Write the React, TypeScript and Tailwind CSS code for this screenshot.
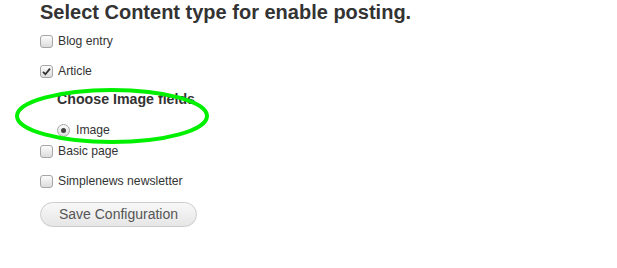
const items = [
  { label: 'Blog entry', checked: false },
  { label: 'Article', checked: true },
];

const rest = ['Basic page', 'Simplenews newsletter'];

function Box({ checked }: { checked: boolean }) {
  return (
    <span className="flex h-[13px] w-[13px] shrink-0 items-center justify-center rounded-[3px] border border-[#a6a6a6] bg-gradient-to-b from-[#fcfcfc] to-[#dcdcdc]">
      {checked && (
        <svg width="9" height="9" viewBox="0 0 9 9">
          <path d="M1 4.8 L3.4 7.2 L8 1.6" fill="none" stroke="#333" strokeWidth="1.8" />
        </svg>
      )}
    </span>
  );
}

function Row({ label, checked, className }: { label: string; checked: boolean; className: string }) {
  return (
    <div className={`flex h-[20px] items-center gap-[5px] ${className}`}>
      <Box checked={checked} />
      <span className="text-[12.2px] text-[#333]">{label}</span>
    </div>
  );
}

export default function App() {
  return (
    <div className="relative h-[268px] w-[617px] bg-white pl-[40px]" style={{ fontFamily: '"Liberation Sans", Arial, sans-serif' }}>
      <h1 className="h-[24px] text-[20px] font-bold leading-[24px] text-[#333]">Select Content type for enable posting.</h1>
      <Row label={items[0].label} checked={items[0].checked} className="mt-[7px]" />
      <Row label={items[1].label} checked={items[1].checked} className="mt-[10px]" />
      <div className="ml-[17px] mt-[9px] flex h-[20px] items-center text-[14.2px] font-bold text-[#333]">Choose Image fields</div>
      <div className="ml-[17px] mt-[10px] flex h-[20px] items-center gap-[6px]">
        <span className="flex h-[13px] w-[13px] items-center justify-center rounded-full border border-[#a6a6a6] bg-gradient-to-b from-[#fcfcfc] to-[#dcdcdc]">
          <span className="h-[5px] w-[5px] rounded-full bg-[#444]" />
        </span>
        <span className="text-[12.2px] text-[#333]">Image</span>
      </div>
      <Row label={rest[0]} checked={false} className="mt-[1px]" />
      <Row label={rest[1]} checked={false} className="mt-[10px]" />
      <button
        type="button"
        className="mt-[11px] flex h-[25px] w-[157px] items-center justify-center rounded-full border border-[#ccc] bg-gradient-to-b from-[#f8f8f8] to-[#e6e6e6] text-[14px] text-[#555]"
      >
        Save Configuration
      </button>
      <svg className="pointer-events-none absolute left-0 top-0" width="617" height="268">
        <ellipse cx="112" cy="116" rx="95" ry="26" fill="none" stroke="#00f000" strokeWidth="4" />
      </svg>
    </div>
  );
}
